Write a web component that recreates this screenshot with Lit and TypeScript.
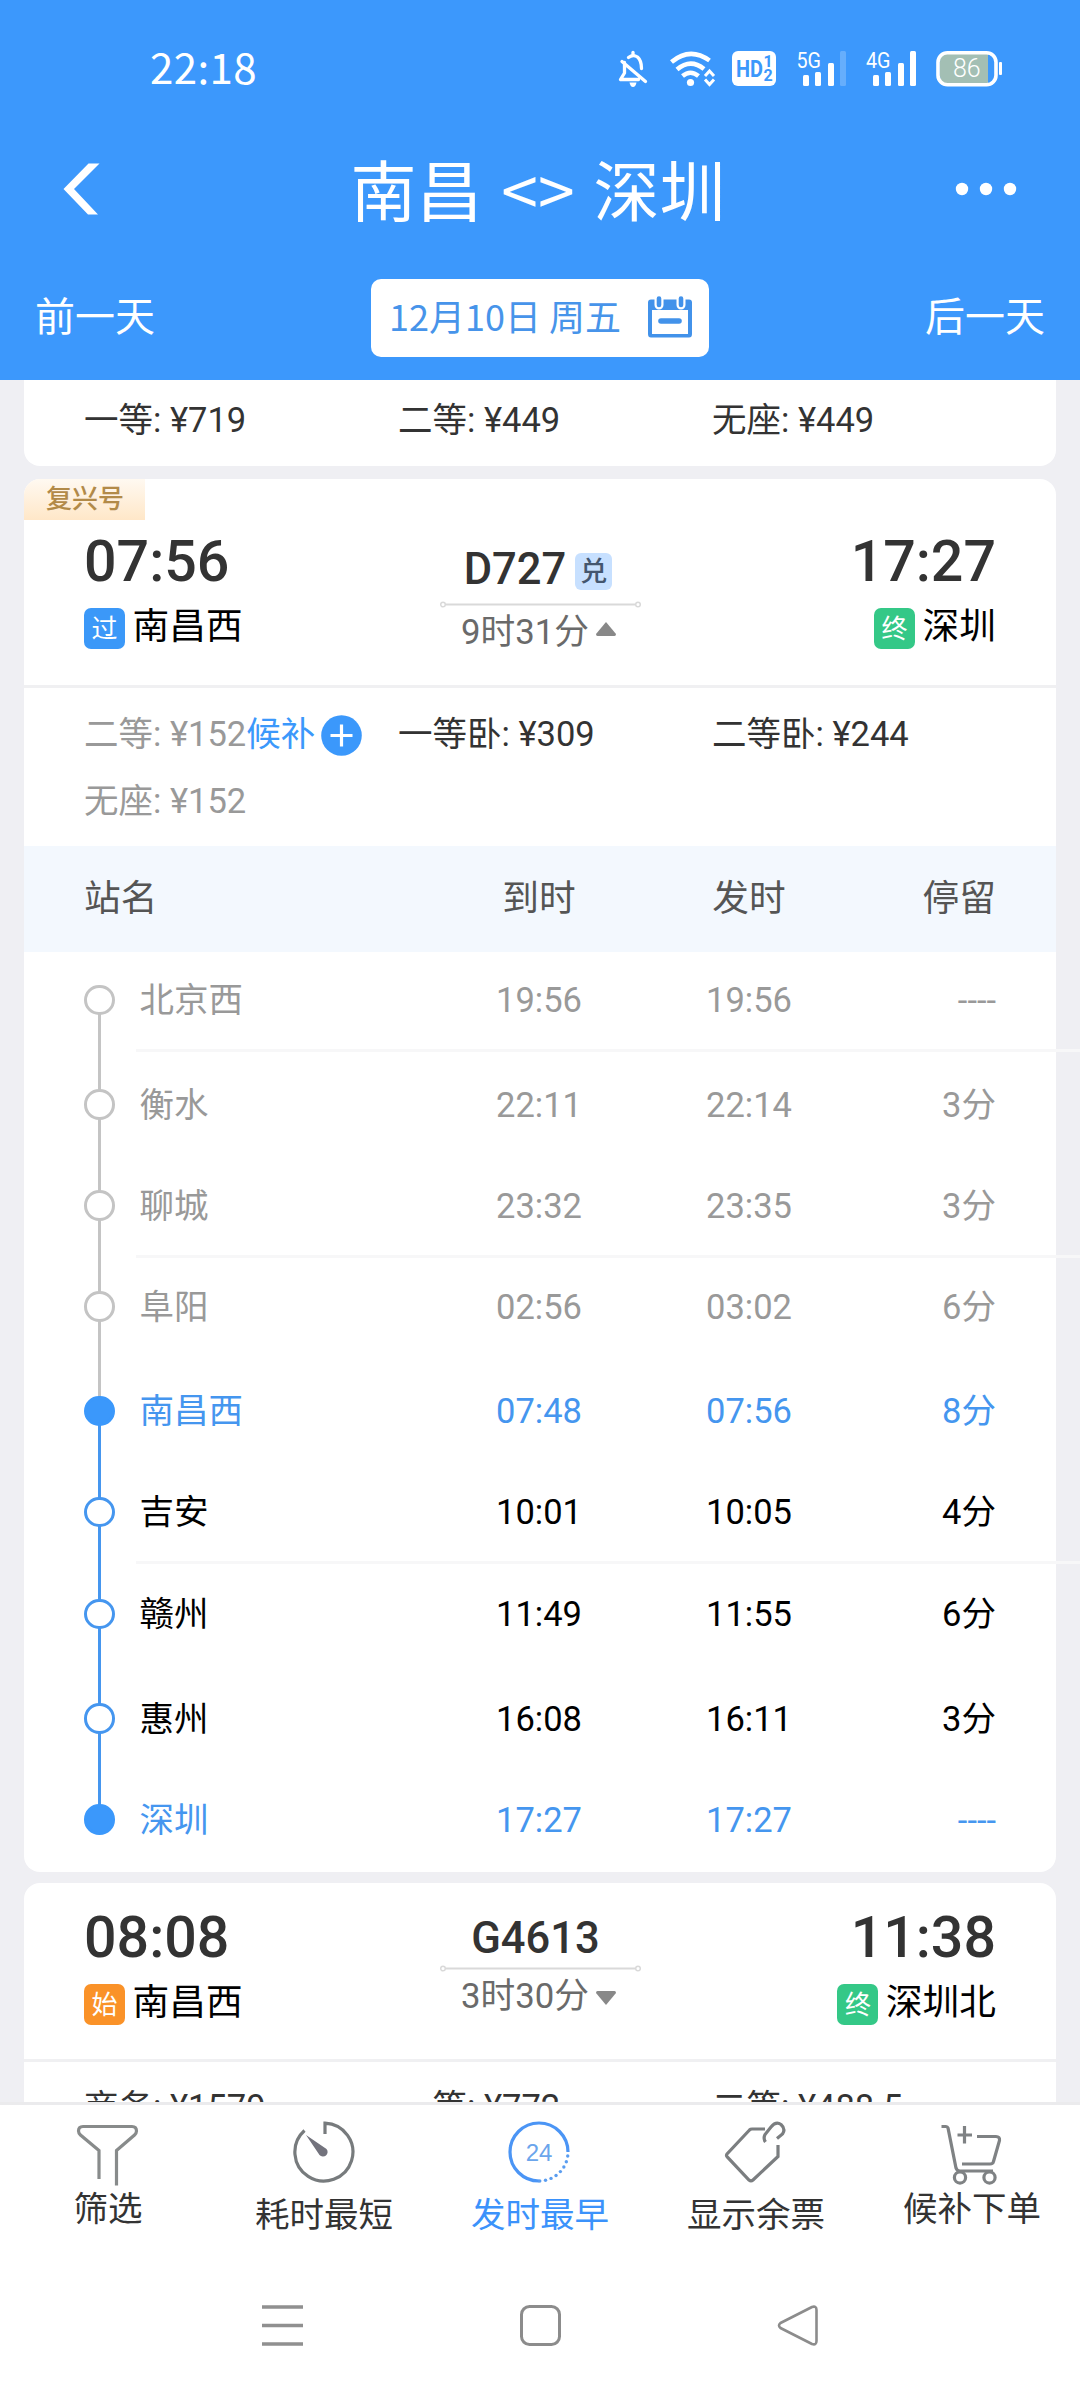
import { LitElement, html, svg, css, nothing } from "lit";
import { customElement, property } from "lit/decorators.js";
import { classMap } from "lit/directives/class-map.js";

interface Price {
  text: string;
  soldOut?: boolean;
  waitlist?: boolean;
}

interface Train {
  number: string;
  redeem?: boolean;
  tag?: string;
  depart: string;
  arrive: string;
  from: string;
  fromMark: string;
  to: string;
  duration: string;
  open: boolean;
  prices: Price[];
}

interface Stop {
  name: string;
  arrive: string;
  depart: string;
  stay: string;
  state: "past" | "key" | "next";
  size: "s" | "m" | "l" | "end";
  rule?: boolean;
}

const FIRST_PRICES: Price[] = [
  { text: "一等: ¥719" },
  { text: "二等: ¥449" },
  { text: "无座: ¥449" },
];

const D727: Train = {
  number: "D727",
  redeem: true,
  tag: "复兴号",
  depart: "07:56",
  arrive: "17:27",
  from: "南昌西",
  fromMark: "过",
  to: "深圳",
  duration: "9时31分",
  open: true,
  prices: [
    { text: "二等: ¥152", soldOut: true, waitlist: true },
    { text: "一等卧: ¥309" },
    { text: "二等卧: ¥244" },
    { text: "无座: ¥152", soldOut: true },
  ],
};

const G4613: Train = {
  number: "G4613",
  depart: "08:08",
  arrive: "11:38",
  from: "南昌西",
  fromMark: "始",
  to: "深圳北",
  duration: "3时30分",
  open: false,
  prices: [{ text: "商务: ¥1579" }, { text: "一等: ¥772" }, { text: "二等: ¥488.5" }],
};

const STOPS: Stop[] = [
  { name: "北京西", arrive: "19:56", depart: "19:56", stay: "----", state: "past", size: "l", rule: true },
  { name: "衡水", arrive: "22:11", depart: "22:14", stay: "3分", state: "past", size: "s" },
  { name: "聊城", arrive: "23:32", depart: "23:35", stay: "3分", state: "past", size: "s", rule: true },
  { name: "阜阳", arrive: "02:56", depart: "03:02", stay: "6分", state: "past", size: "l" },
  { name: "南昌西", arrive: "07:48", depart: "07:56", stay: "8分", state: "key", size: "s" },
  { name: "吉安", arrive: "10:01", depart: "10:05", stay: "4分", state: "next", size: "m", rule: true },
  { name: "赣州", arrive: "11:49", depart: "11:55", stay: "6分", state: "next", size: "l" },
  { name: "惠州", arrive: "16:08", depart: "16:11", stay: "3分", state: "next", size: "s" },
  { name: "深圳", arrive: "17:27", depart: "17:27", stay: "----", state: "key", size: "end" },
];

@customElement("status-bar")
export class StatusBar extends LitElement {
  static styles = css`
    :host {
      display: flex;
      align-items: center;
      justify-content: space-between;
      height: 138px;
      padding: 0 76px 0 150px;
      color: #fff;
    }
    .clock {
      padding-bottom: 6px;
      font: 42px/44px "Noto Sans CJK SC", sans-serif;
      letter-spacing: 0.4px;
    }
    .icons {
      display: block;
      width: 390px;
      height: 44px;
    }
    .net {
      font: 22px "Roboto", sans-serif;
    }
    .hd {
      font: 700 24px "Roboto", sans-serif;
    }
    .hd-num {
      font: 700 16px "Roboto", sans-serif;
    }
    .level {
      font: 300 25px "Roboto", sans-serif;
    }
  `;

  render() {
    return html`
      <span class="clock">22:18</span>
      <svg class="icons" viewBox="614 47 390 44" fill="none">
        <g stroke="#fff" stroke-width="3.300" stroke-linecap="round" stroke-linejoin="round">
          <path d="M624.5 62.5 L624.5 73 L620.5 79.5 H638.5 M622 61.5 L645.5 81.5" />
          <path d="M628.5 57.5 Q633 54 637.5 57 Q641.5 60.5 641.5 68.5" />
          <path d="M633 52.5 V55" />
        </g>
        <path d="M629.5 82.5 h7 q-1 4.500 -3.500 4.500 t-3.500 -4.500z" fill="#fff" />
        <g stroke="#fff" stroke-width="4.600">
          <path d="M671.500 62 Q690 46.500 709.500 60.500" />
          <path d="M677 69.500 Q690.500 58 704 69" />
          <path d="M682.500 76 Q690.500 69.500 698.500 76" />
        </g>
        <circle cx="690.5" cy="82.500" r="3.600" fill="#fff" />
        <path d="M705 76 l4.500 -5 l4.500 5 M705 79.500 l4.500 5 l4.500 -5" stroke="#fff" stroke-width="3" />
        <rect x="732" y="51" width="44" height="35" rx="6" fill="#fff" />
        <text class="hd" x="736" y="77" fill="#3b98fb" textLength="27" lengthAdjust="spacingAndGlyphs">HD</text>
        <text class="hd-num" x="763.500" y="67" fill="#3b98fb">1</text>
        <text class="hd-num" x="763.500" y="81" fill="#3b98fb">2</text>
        <text class="net" x="796.500" y="67.500" fill="#fff" textLength="24.500" lengthAdjust="spacingAndGlyphs">5G</text>
        <g fill="#fff">
          <rect x="803" y="75" width="6" height="11" rx="1.500" />
          <rect x="815" y="72" width="6" height="14" rx="1.500" />
          <rect x="828" y="63" width="6" height="23" rx="1.500" />
          <rect x="840" y="51" width="6" height="35" rx="1.500" opacity=".22" />
        </g>
        <text class="net" x="866" y="67.500" fill="#fff" textLength="24.500" lengthAdjust="spacingAndGlyphs">4G</text>
        <g fill="#fff">
          <rect x="873" y="75" width="6" height="11" rx="1.500" />
          <rect x="885" y="72" width="6" height="14" rx="1.500" />
          <rect x="898" y="63" width="6" height="23" rx="1.500" />
          <rect x="910" y="51" width="6" height="35" rx="1.500" />
        </g>
        <path d="M988 54 H948 Q940 54 940 62 V76 Q940 84 948 84 H988z" fill="#a3bfb4" />
        <rect x="938" y="52.700" width="58" height="32" rx="9.500" stroke="#fff" stroke-width="3.600" />
        <rect x="999" y="62" width="3" height="13" rx="1" fill="#fff" />
        <text class="level" x="953" y="77" fill="#fff">86</text>
      </svg>
    `;
  }
}

@customElement("train-head")
export class TrainHead extends LitElement {
  @property({ attribute: false }) train!: Train;

  static styles = css`
    :host {
      display: block;
      font-family: "Roboto", "Noto Sans CJK SC", sans-serif;
    }
    .head {
      position: relative;
      display: grid;
      grid-template-columns: 1fr 201px 1fr;
      height: 175.500px;
      padding: 0 60px;
      border-bottom: 3px solid #f0f0f2;
    }
    .head.tagged {
      height: 206px;
    }
    .tag {
      position: absolute;
      left: 0;
      top: 0;
      width: 121px;
      height: 41px;
      box-sizing: border-box;
      padding-left: 22px;
      border-top-left-radius: 16px;
      background: linear-gradient(#fff9f1, #ffe7c8);
      color: #b28a48;
      font-size: 26px;
      font-weight: 500;
      line-height: 41px;
    }
    .side {
      padding-top: 25px;
    }
    .tagged .side {
      padding-top: 52.500px;
    }
    .time {
      color: #333;
      font-size: 57.300px;
      font-weight: 500;
      line-height: 60px;
    }
    .place {
      display: flex;
      align-items: center;
      height: 42px;
      margin-top: 15.500px;
      color: #000;
      font-size: 36.700px;
      line-height: 42px;
    }
    .end {
      text-align: right;
    }
    .end .place {
      justify-content: flex-end;
    }
    .name {
      padding-bottom: 3px;
    }
    .mark {
      width: 41px;
      height: 41px;
      margin-right: 7.500px;
      border-radius: 7px;
      color: #fff;
      font-size: 26px;
      line-height: 42px;
      text-align: center;
    }
    .pass {
      background: #3b98f8;
    }
    .origin {
      background: #fa9228;
    }
    .final {
      background: #34c887;
    }
    .mid {
      display: flex;
      flex-direction: column;
      align-items: center;
      padding-top: 34px;
    }
    .tagged .mid {
      padding-top: 68.500px;
    }
    .code {
      display: flex;
      align-items: center;
      height: 44px;
      padding-right: 9px;
      color: #333;
      font-size: 43.500px;
      font-weight: 500;
      line-height: 44px;
    }
    .tagged .code {
      padding-right: 4px;
    }
    .redeem {
      width: 37px;
      height: 37px;
      margin: 4px 0 0 9px;
      border-radius: 6px;
      background: #c7e0ff;
      color: #44566e;
      font-size: 27px;
      line-height: 38px;
      text-align: center;
    }
    .track {
      display: block;
      width: 201px;
      height: 7px;
      margin-top: 3.500px;
    }
    .tagged .track {
      margin-top: 9px;
    }
    .duration {
      display: flex;
      align-items: center;
      gap: 7px;
      margin: 4px 0 0 -3px;
      color: #6a6a6a;
      font-size: 34.700px;
      line-height: 40px;
      white-space: nowrap;
    }
    .caret {
      display: block;
      width: 20px;
      height: 14px;
      margin-top: 5px;
    }
    .tagged .caret {
      margin-top: -5px;
    }
  `;

  render() {
    const t = this.train;
    const mark = { mark: true, pass: t.fromMark === "过", origin: t.fromMark === "始" };
    return html`
      <div class=${classMap({ head: true, tagged: !!t.tag })}>
        ${t.tag ? html`<span class="tag">${t.tag}</span>` : nothing}
        <div class="side">
          <div class="time">${t.depart}</div>
          <div class="place"><span class=${classMap(mark)}>${t.fromMark}</span><span class="name">${t.from}</span></div>
        </div>
        <div class="mid">
          <div class="code">${t.number}${t.redeem ? html`<span class="redeem">兑</span>` : nothing}</div>
          <svg class="track" viewBox="0 0 201 7" fill="none" stroke="#d9d9d9" stroke-width="1.500">
            <circle cx="3" cy="3.500" r="2.300" />
            <circle cx="198" cy="3.500" r="2.300" />
            <path d="M5.500 3.500 H195.500" stroke-width="2" />
          </svg>
          <div class="duration">
            ${t.duration}
            <svg class="caret" viewBox="0 0 20 14" fill="#888">
              <path d=${t.open ? "M10 0 L20 12 Q20 14 18.500 14 H1.500 Q0 14 0 12z" : "M10 14 L20 2 Q20 0 18.500 0 H1.500 Q0 0 0 2z"} />
            </svg>
          </div>
        </div>
        <div class="side end">
          <div class="time">${t.arrive}</div>
          <div class="place"><span class="mark final">终</span><span class="name">${t.to}</span></div>
        </div>
      </div>
    `;
  }
}

@customElement("price-grid")
export class PriceGrid extends LitElement {
  @property({ attribute: false }) prices: Price[] = [];

  static styles = css`
    :host {
      display: grid;
      grid-template-columns: 314px 314px 1fr;
      grid-auto-rows: 67px;
      padding-left: 60px;
      color: #333;
      font: 34.500px/67px "Roboto", "Noto Sans CJK SC", sans-serif;
    }
    .price {
      display: flex;
      align-items: center;
      white-space: nowrap;
    }
    .sold {
      color: #999;
    }
    .wait {
      color: #3b98fb;
    }
    .plus {
      width: 41px;
      height: 41px;
      margin: 2px 0 0 5.500px;
    }
  `;

  render() {
    return this.prices.map(
      (p) => html`
        <div class=${classMap({ price: true, sold: !!p.soldOut })}>
          ${p.text}${p.waitlist
            ? html`<span class="wait">候补</span>
                <svg class="plus" viewBox="0 0 41 41">
                  <circle cx="20.5" cy="20.5" r="20.300" fill="#3b98fb" />
                  <path d="M20.500 9.500 V31.500 M9.500 20.500 H31.500" stroke="#fff" stroke-width="3.200" />
                </svg>`
            : nothing}
        </div>
      `,
    );
  }
}

@customElement("stop-table")
export class StopTable extends LitElement {
  @property({ attribute: false }) stops: Stop[] = [];

  static styles = css`
    :host {
      display: block;
      font-family: "Roboto", "Noto Sans CJK SC", sans-serif;
    }
    .cols {
      display: grid;
      grid-template-columns: 350px 210px 210px 1fr;
      padding: 0 60px;
    }
    .head {
      height: 106px;
      background: #f3f8fe;
      color: #555;
      font-size: 36.700px;
      line-height: 106px;
    }
    .mid {
      text-align: center;
    }
    .stay {
      text-align: right;
    }
    .body {
      padding-top: 28px;
    }
    .row {
      position: relative;
      font-size: 34.500px;
      line-height: 40px;
    }
    .row .cols {
      height: 40px;
    }
    .s {
      height: 101px;
    }
    .m {
      height: 102px;
    }
    .l {
      height: 104.500px;
    }
    .end {
      height: 72.500px;
    }
    .past {
      color: #999;
      --rail: #c4c4c4;
    }
    .key {
      color: #4596ef;
      --rail: #4596ef;
    }
    .next {
      color: #000;
      --rail: #4596ef;
    }
    .station {
      display: flex;
      align-items: center;
      gap: 25px;
    }
    .dot {
      position: relative;
      box-sizing: border-box;
      width: 30.500px;
      height: 30.500px;
      border: 3px solid var(--rail);
      border-radius: 50%;
      background: #fff;
    }
    .key .dot {
      border-color: #3b98fb;
      background: #3b98fb;
    }
    .row::before {
      content: "";
      position: absolute;
      left: 74px;
      top: 20px;
      width: 3px;
      height: 100%;
      background: var(--rail);
    }
    .end::before {
      display: none;
    }
    .rule {
      height: 3px;
      margin: 29px -24px 0 112px;
      background: #f7f7f8;
    }
  `;

  render() {
    return html`
      <div class="cols head">
        <span>站名</span><span class="mid">到时</span><span class="mid">发时</span><span class="stay">停留</span>
      </div>
      <div class="body">
        ${this.stops.map(
          (s) => html`
            <div class="row ${s.state} ${s.size}">
              <div class="cols">
                <span class="station"><i class="dot"></i>${s.name}</span>
                <span class="mid">${s.arrive}</span>
                <span class="mid">${s.depart}</span>
                <span class="stay">${s.stay}</span>
              </div>
              ${s.rule ? html`<div class="rule"></div>` : nothing}
            </div>
          `,
        )}
      </div>
    `;
  }
}

const DOTS = Array.from({ length: 8 }, (_, i) => {
  const a = ((8 + i * 11.5) * Math.PI) / 180;
  return { x: 32 + 29 * Math.cos(a), y: 32 + 29 * Math.sin(a) };
});

const TABS = [
  {
    label: "筛选",
    kind: "high",
    art: svg`<path d="M8 4.500 H57 Q61.500 4.500 61.500 9 Q61.500 11 59.500 13 L41.500 28.500 V63.500 M8 4.500 Q3.500 4.500 3.500 9 Q3.500 11 5.500 13 L24 28.500 V57" stroke="#888b8b" />`,
  },
  {
    label: "耗时最短",
    kind: "low",
    art: svg`<path d="M13.500 10.500 A29 29 0 1 0 34 3.100 V14" stroke="#777b7d" /><path d="M15 15 L35.500 29 A4.600 4.600 0 1 1 28.500 35z" fill="#73737d" />`,
  },
  {
    label: "发时最早",
    kind: "low active",
    art: svg`<path d="M61 32 A29 29 0 1 0 32 61" stroke="#4b95f5" />
      ${DOTS.map((d) => svg`<circle cx=${d.x} cy=${d.y} r="1.700" fill="#5a9df0" />`)}
      <text x="32" y="41" text-anchor="middle" class="num">24</text>`,
  },
  {
    label: "显示余票",
    kind: "low",
    art: svg`<path d="M42 9 H29 Q27.500 9 26.500 10 L4 34 Q3 35.300 4 36.600 L26 60 Q28 61.800 30 60 L55 36.500 V25" stroke="#7b7e80" />
      <path d="M42.500 22 Q40 18.500 42 14.500 L48 7 Q53 1 58 4.500 Q63 9 59.500 14 L54 18.500" stroke="#7b7e80" />`,
  },
  {
    label: "候补下单",
    kind: "high",
    art: svg`<g stroke="#7f8284"><path d="M2.500 4.500 H7 Q8.500 4.500 9 6 L17 46 Q18 49 21 49 H54 M38 14.500 H57 Q61 14.500 60.500 18.500 L54.500 39.500 Q54 42 51 42 H23" />
      <circle cx="21" cy="55.500" r="5.600" /><circle cx="50.500" cy="55.500" r="5.600" /><path d="M18.500 13 H33 M25.500 4 V21.500" /></g>`,
  },
];

@customElement("tab-bar")
export class TabBar extends LitElement {
  static styles = css`
    :host {
      display: grid;
      grid-template-columns: repeat(5, 1fr);
      height: 155px;
      border-top: 3px solid #ebebed;
      background: #fff;
      color: #333;
      font: 34.500px/40px "Roboto", "Noto Sans CJK SC", sans-serif;
    }
    .tab {
      display: flex;
      flex-direction: column;
      align-items: center;
      padding-top: 15px;
    }
    .art {
      display: block;
      width: 64px;
      height: 64px;
      margin-right: 1.500px;
      stroke-width: 3.200;
    }
    .high .label {
      margin-top: 3px;
    }
    .high .art {
      margin-top: 2px;
    }
    .low .label {
      margin-top: 11px;
    }
    .active {
      color: #3b92fb;
    }
    .num {
      font: 24px "Liberation Sans", sans-serif;
      fill: #6ba5ec;
    }
  `;

  render() {
    return TABS.map(
      (t) => html`
        <div class="tab ${t.kind}">
          <svg class="art" viewBox="0 0 64 64" fill="none">${t.art}</svg>
          <span class="label">${t.label}</span>
        </div>
      `,
    );
  }
}

@customElement("app-root")
export class AppRoot extends LitElement {
  static styles = css`
    :host {
      display: flex;
      flex-direction: column;
      width: 1080px;
      height: 2400px;
      overflow: hidden;
      background: #efeff3;
      font-family: "Noto Sans CJK SC", sans-serif;
    }
    .header {
      flex: none;
      height: 380px;
      background: #3c98fc;
      color: #fff;
    }
    .titlebar {
      display: grid;
      grid-template-columns: 180px 1fr 180px;
      align-items: center;
      height: 101px;
    }
    .title {
      padding: 0 4px 4px 0;
      font-size: 66px;
      line-height: 96px;
      text-align: center;
      white-space: pre;
      word-spacing: 4px;
    }
    .back {
      margin-left: 63px;
      width: 38px;
      height: 52px;
    }
    .more {
      margin-left: 54px;
      width: 64px;
      height: 16px;
    }
    .daybar {
      display: flex;
      align-items: center;
      justify-content: space-between;
      height: 124px;
      padding: 17px 35px 0;
      font-size: 40px;
      line-height: 56px;
    }
    .day {
      padding-bottom: 9px;
    }
    .date {
      display: flex;
      align-items: center;
      gap: 27px;
      box-sizing: border-box;
      width: 338px;
      height: 78px;
      padding-left: 18px;
      border-radius: 10px;
      background: #fff;
      color: #4794ea;
      font-size: 36px;
      line-height: 50px;
      white-space: nowrap;
    }
    .date-text {
      padding-bottom: 6px;
    }
    .cal {
      flex: none;
      width: 44px;
      height: 42px;
      margin-bottom: 2px;
    }
    .list {
      display: flex;
      flex: 1;
      flex-direction: column;
      min-height: 0;
      padding: 0 24px;
      overflow: hidden;
    }
    .card {
      flex: none;
      margin-bottom: 13px;
      border-radius: 16px;
      background: #fff;
    }
    .first {
      padding: 6.500px 0 12.500px;
      border-radius: 0 0 16px 16px;
    }
    .middle {
      margin-bottom: 11px;
    }
    .prices {
      padding-top: 12.500px;
      padding-bottom: 11.500px;
    }
    .nav {
      flex: none;
      height: 140px;
      background: #fff;
    }
    .keys {
      display: flex;
      align-items: center;
      justify-content: space-between;
      padding: 43px 260px 0;
    }
    .key {
      display: block;
      width: 44px;
      height: 44px;
    }
  `;

  render() {
    return html`
      <div class="header">
        <status-bar></status-bar>
        <div class="titlebar">
          <svg class="back" viewBox="0 0 38 52"><path d="M25.500 0.500 H36.500 L11 26 L35 51.500 H25 L0.500 26z" fill="#fff" /></svg>
          <span class="title">南昌 &lt;&gt; 深圳</span>
          <svg class="more" viewBox="954 180 64 16" fill="#fff">
            <circle cx="962" cy="188" r="6.200" /><circle cx="986" cy="188" r="6.200" /><circle cx="1010" cy="188" r="6.200" />
          </svg>
        </div>
        <div class="daybar">
          <span class="day">前一天</span>
          <div class="date">
            <span class="date-text">12月10日 周五</span>
            <svg class="cal" viewBox="0 0 44 42">
              <path d="M3 3.500 H41 Q44 3.500 44 6.500 V38 Q44 41.500 41 41.500 H3 Q0 41.500 0 38 V6.500 Q0 3.500 3 3.500z M4 14 V38 H40 V14z" fill="#4292ea" fill-rule="evenodd" />
              <path d="M11 2.500 V9 M33 2.500 V9" stroke="#fff" stroke-width="9" stroke-linecap="round" />
              <path d="M11 2.500 V9 M33 2.500 V9" stroke="#4292ea" stroke-width="4.600" stroke-linecap="round" />
              <path d="M13 25 H31" stroke="#4292ea" stroke-width="5.600" stroke-linecap="round" />
            </svg>
          </div>
          <span class="day">后一天</span>
        </div>
      </div>
      <div class="list">
        <div class="card first"><price-grid .prices=${FIRST_PRICES}></price-grid></div>
        <div class="card middle">
          <train-head .train=${D727}></train-head>
          <price-grid class="prices" .prices=${D727.prices}></price-grid>
          <stop-table .stops=${STOPS}></stop-table>
        </div>
        <div class="card">
          <train-head .train=${G4613}></train-head>
          <price-grid class="prices" .prices=${G4613.prices}></price-grid>
        </div>
      </div>
      <tab-bar></tab-bar>
      <div class="nav">
        <div class="keys">
          <svg class="key" viewBox="0 0 44 44" stroke="#909090" stroke-width="3.600"><path d="M2 4 H43 M2 22.500 H43 M2 41 H43" /></svg>
          <svg class="key" viewBox="0 0 44 44" fill="none" stroke="#8c8c8c" stroke-width="3"><rect x="3.500" y="3.500" width="38" height="38" rx="8" /></svg>
          <svg class="key" viewBox="0 0 44 44" fill="none" stroke="#8c8c8c" stroke-width="2.600" stroke-linejoin="round">
            <path d="M4.500 20 Q1.500 22.500 4.500 25 L36 41 Q40.500 42.500 40.500 38 V7 Q40.500 2.500 36 4z" />
          </svg>
        </div>
      </div>
    `;
  }
}
